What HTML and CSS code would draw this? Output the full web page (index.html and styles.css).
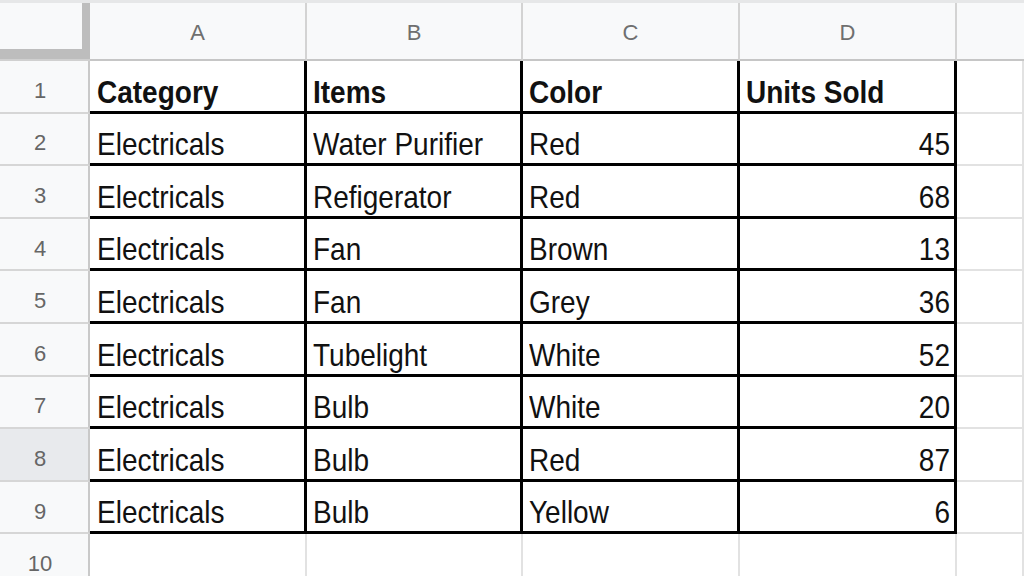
FILE: index.html
```html
<!DOCTYPE html>
<html>
<head>
<meta charset="utf-8">
<link rel="stylesheet" href="styles.css">
</head>
<body>
<div class="strip"></div>
<div class="sheet">
  <div class="corner"><div class="corner-box"></div></div>
  <div class="ch">A</div><div class="ch">B</div><div class="ch">C</div><div class="ch">D</div><div class="ch last"></div>

  <div class="rh">1</div>
  <div class="d hd"><span class="t">Category</span></div>
  <div class="d hd"><span class="t">Items</span></div>
  <div class="d hd"><span class="t">Color</span></div>
  <div class="d hd"><span class="t">Units Sold</span></div>
  <div class="c"></div>

  <div class="rh">2</div>
  <div class="d"><span class="t">Electricals</span></div>
  <div class="d"><span class="t">Water Purifier</span></div>
  <div class="d"><span class="t">Red</span></div>
  <div class="d num"><span class="t">45</span></div>
  <div class="c"></div>

  <div class="rh">3</div>
  <div class="d"><span class="t">Electricals</span></div>
  <div class="d"><span class="t">Refigerator</span></div>
  <div class="d"><span class="t">Red</span></div>
  <div class="d num"><span class="t">68</span></div>
  <div class="c"></div>

  <div class="rh">4</div>
  <div class="d"><span class="t">Electricals</span></div>
  <div class="d"><span class="t">Fan</span></div>
  <div class="d"><span class="t">Brown</span></div>
  <div class="d num"><span class="t">13</span></div>
  <div class="c"></div>

  <div class="rh">5</div>
  <div class="d"><span class="t">Electricals</span></div>
  <div class="d"><span class="t">Fan</span></div>
  <div class="d"><span class="t">Grey</span></div>
  <div class="d num"><span class="t">36</span></div>
  <div class="c"></div>

  <div class="rh">6</div>
  <div class="d"><span class="t">Electricals</span></div>
  <div class="d"><span class="t">Tubelight</span></div>
  <div class="d"><span class="t">White</span></div>
  <div class="d num"><span class="t">52</span></div>
  <div class="c"></div>

  <div class="rh">7</div>
  <div class="d"><span class="t">Electricals</span></div>
  <div class="d"><span class="t">Bulb</span></div>
  <div class="d"><span class="t">White</span></div>
  <div class="d num"><span class="t">20</span></div>
  <div class="c"></div>

  <div class="rh active">8</div>
  <div class="d"><span class="t">Electricals</span></div>
  <div class="d"><span class="t">Bulb</span></div>
  <div class="d"><span class="t">Red</span></div>
  <div class="d num"><span class="t">87</span></div>
  <div class="c"></div>

  <div class="rh">9</div>
  <div class="d"><span class="t">Electricals</span></div>
  <div class="d"><span class="t">Bulb</span></div>
  <div class="d"><span class="t">Yellow</span></div>
  <div class="d num"><span class="t">6</span></div>
  <div class="c"></div>

  <div class="rh">10</div>
  <div class="c"></div><div class="c"></div><div class="c"></div><div class="c"></div><div class="c"></div>
</div>
</body>
</html>
```

FILE: styles.css
```css
html, body {
  margin: 0;
  padding: 0;
  background: #ffffff;
  overflow: hidden;
  width: 1024px;
  height: 576px;
  font-family: "Liberation Sans", Arial, sans-serif;
}

.strip {
  height: 3px;
  background: #e6e7e8;
}

.sheet {
  display: grid;
  grid-template-columns: 90px 217px 216px 217px 217px 1fr;
  grid-template-rows: 58px repeat(10, 52.6px);
}

.sheet > div {
  box-sizing: border-box;
  min-width: 0;
}

.corner {
  background: #bdbdbd;
  border-bottom: 2px solid #d0d0d0;
}

.corner-box {
  width: 82px;
  height: 46px;
  background: #f8f9fa;
}

.ch {
  background: #f8f9fa;
  border-right: 2px solid #d3d3d3;
  border-bottom: 2px solid #c6c6c6;
  display: flex;
  align-items: center;
  justify-content: center;
  padding-top: 4px;
  font-size: 22px;
  color: #6f6f6f;
}

.ch.last {
  border-right: none;
}

.rh {
  background: #f8f9fa;
  border-right: 2px solid #c9c9c9;
  border-bottom: 2px solid #d6d6d6;
  display: flex;
  align-items: center;
  justify-content: center;
  padding-right: 8px;
  padding-top: 9px;
  font-size: 22px;
  color: #666666;
}

.rh.active {
  background: #e8eaed;
}

.c {
  border-right: 2px solid #e2e2e2;
  border-bottom: 2px solid #e2e2e2;
}

.d {
  border-right: 3px solid #000000;
  border-bottom: 3px solid #000000;
  display: flex;
  align-items: flex-end;
  padding: 0 4px 3px 6px;
  font-size: 28px;
  line-height: 28px;
  color: #111111;
  white-space: nowrap;
}

.sheet > .d:nth-child(6n+2) {
  padding-left: 7px;
}

.d.hd {
  font-weight: bold;
}

.d.num {
  justify-content: flex-end;
}

.t {
  display: inline-block;
  transform: scaleY(1.1);
  transform-origin: 50% 80%;
}
```
